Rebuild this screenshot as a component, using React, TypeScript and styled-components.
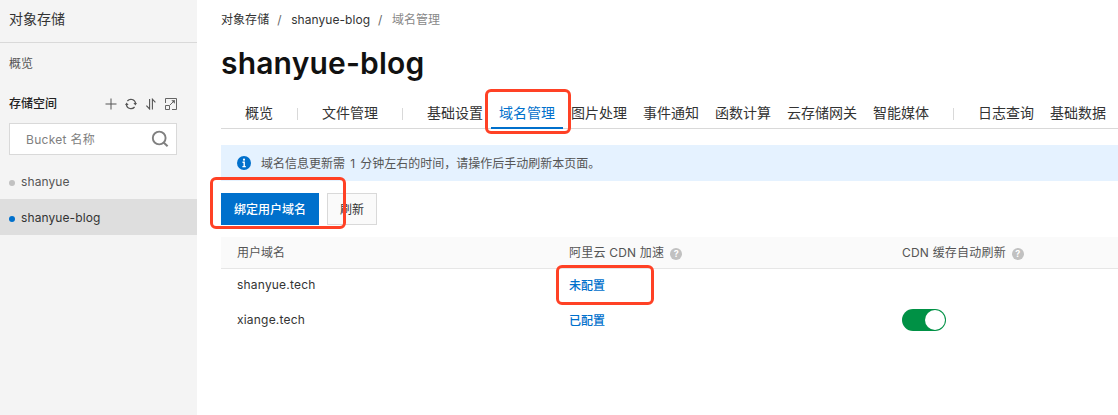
import React from "react";
import styled, { createGlobalStyle } from "styled-components";

const GlobalStyle = createGlobalStyle`
  * { box-sizing: border-box; }
  body {
    margin: 0;
    background: #fff;
    color: #333;
    font: 12px/18px Inter, "Noto Sans CJK SC", sans-serif;
    overflow: hidden;
  }
  h1 { margin: 0; }
`;

const Page = styled.div`
  display: flex;
  position: relative;
  width: 1118px;
  height: 415px;
  overflow: hidden;
`;

const Sidebar = styled.aside`
  flex: none;
  width: 197px;
  background: #f4f4f4;
`;

const SidebarTitle = styled.div`
  height: 43px;
  padding: 8px 9px 0;
  border-bottom: 1px solid #d9d9d9;
  font-size: 14px;
  line-height: 22px;
`;

const SidebarLink = styled.div`
  height: 41px;
  padding: 0 9px;
  color: #555;
  line-height: 41px;
`;

const BucketHeader = styled.div`
  display: flex;
  align-items: center;
  justify-content: space-between;
  height: 39px;
  padding: 0 20px 0 9px;
  color: #222;
  font-weight: 500;
`;

const BucketActions = styled.div`
  display: flex;
  align-items: center;
  gap: 8px;
  color: #555;
`;

const Icon = styled.svg`
  display: block;
  flex: none;
  fill: none;
  stroke: currentColor;
`;

const SearchBox = styled.div`
  display: flex;
  align-items: center;
  justify-content: space-between;
  width: 168px;
  height: 32px;
  margin: 0 0 9px 9px;
  padding: 0 7px 0 16px;
  border: 1px solid #d9d9d9;
  background: #fff;
  color: #808080;
`;

const SearchLabel = styled.span`
  padding-top: 1px;
  letter-spacing: 0.3px;
`;

const BucketItem = styled.div<{ $active?: boolean }>`
  display: flex;
  align-items: center;
  gap: 6px;
  height: ${(p) => (p.$active ? 36 : 35)}px;
  padding: ${(p) => (p.$active ? 2 : 0)}px 0 0 9px;
  background: ${(p) => (p.$active ? "#dedede" : "transparent")};
  color: ${(p) => (p.$active ? "#333" : "#555")};
  font-size: 12px;
  letter-spacing: 0.1px;

  &::before {
    content: "";
    width: 6px;
    height: 6px;
    margin-top: ${(p) => (p.$active ? 1 : 3)}px;
    border-radius: 50%;
    background: ${(p) => (p.$active ? "#0070cc" : "#c1c1c1")};
  }
`;

const Main = styled.main`
  flex: 1;
  min-width: 0;
  padding-left: 24px;
`;

const Breadcrumb = styled.nav`
  display: flex;
  height: 40px;
  line-height: 39px;
  gap: 8px;
`;

const Crumb = styled.span<{ $muted?: boolean }>`
  color: ${(p) => (p.$muted ? "#888" : "#333")};
  letter-spacing: ${(p) => (p.$muted ? 0 : 0.05)}px;
`;

const Slash = styled.span`
  width: 6px;
  color: #666;
`;

const Title = styled.h1`
  height: 58px;
  color: #111;
  font-size: 30px;
  font-weight: 600;
  letter-spacing: 0.18px;
  line-height: 47px;
`;

const Tabs = styled.div`
  display: flex;
  height: 31px;
  padding-left: 16px;
  border-bottom: 1px solid #d9d9d9;
`;

const Tab = styled.div<{ $active?: boolean }>`
  flex: none;
  height: 31px;
  padding: 0 8px;
  border-bottom: 2px solid ${(p) => (p.$active ? "#0070cc" : "transparent")};
  color: ${(p) => (p.$active ? "#0070cc" : "#333")};
  font-size: 14px;
  line-height: 29px;
`;

const TabDivider = styled.i`
  flex: none;
  width: 1px;
  height: 12px;
  margin: 10px 16px 0;
  background: #d9d9d9;
`;

const Notice = styled.div`
  display: flex;
  align-items: center;
  gap: 10px;
  height: 36px;
  margin-top: 16px;
  padding-left: 16px;
  background: #e5f2ff;
  color: #555;
`;

const NoticeText = styled.span`
  padding-top: 2px;
  word-spacing: 1.8px;
`;

const Actions = styled.div`
  display: flex;
  gap: 8px;
  padding: 12px 0;
`;

const Button = styled.button<{ $primary?: boolean }>`
  height: 32px;
  width: ${(p) => (p.$primary ? 98 : 50)}px;
  padding: 2px 0 0;
  border: 1px solid ${(p) => (p.$primary ? "#0070cc" : "#d9d9d9")};
  background: ${(p) => (p.$primary ? "#0070cc" : "#fafafa")};
  color: ${(p) => (p.$primary ? "#fff" : "#333")};
  font: inherit;
  font-weight: ${(p) => (p.$primary ? 500 : 400)};
`;

const Row = styled.div<{ $head?: boolean }>`
  display: grid;
  grid-template-columns: 332px 333px 1fr;
  height: ${(p) => (p.$head ? 32 : 35)}px;
  background: ${(p) => (p.$head ? "#fafafa" : "#fff")};
  border-bottom: ${(p) => (p.$head ? "1px solid #e6e6e6" : "none")};
  color: ${(p) => (p.$head ? "#555" : "#333")};
`;

const Cell = styled.div`
  display: flex;
  align-items: center;
  gap: 6px;
  height: 32px;
  padding-left: 16px;
`;

const HeadLabel = styled.span`
  letter-spacing: 0.2px;
`;

const Domain = styled.span`
  letter-spacing: 0.2px;
`;

const StatusLink = styled.a`
  padding-top: 2px;
  color: #0070cc;
  font-weight: 500;
`;

const Help = styled.span`
  width: 12px;
  height: 12px;
  margin-top: 2px;
  border-radius: 50%;
  background: #c1c1c1;
  color: #fff;
  font-size: 9px;
  font-weight: 700;
  line-height: 12px;
  text-align: center;
`;

const Switch = styled.span`
  display: flex;
  justify-content: flex-end;
  width: 44px;
  height: 22px;
  padding: 1px;
  border-radius: 11px;
  background: #009145;

  &::after {
    content: "";
    width: 20px;
    height: 20px;
    border-radius: 50%;
    background: #fff;
  }
`;

const Highlight = styled.div<{ $x: number; $y: number; $w: number; $h: number }>`
  position: absolute;
  left: ${(p) => p.$x}px;
  top: ${(p) => p.$y}px;
  width: ${(p) => p.$w}px;
  height: ${(p) => p.$h}px;
  border: 3px solid #ff4125;
  border-radius: 6px;
`;

const tabGroups = [
  ["概览"],
  ["文件管理"],
  ["基础设置", "域名管理", "图片处理", "事件通知", "函数计算", "云存储网关", "智能媒体"],
  ["日志查询", "基础数据"],
];

export default function App() {
  return (
    <>
      <GlobalStyle />
      <Page>
        <Sidebar>
          <SidebarTitle>对象存储</SidebarTitle>
          <SidebarLink>概览</SidebarLink>
          <BucketHeader>
            存储空间
            <BucketActions>
              <Icon width="12" height="12" viewBox="0 0 12 12">
                <path d="M6 .5v11M.5 6h11" />
              </Icon>
              <Icon width="12" height="12" viewBox="0 0 12 12">
                <path d="M2.4 3A4.7 4.7 0 0 1 10.6 5.2M9.6 9A4.7 4.7 0 0 1 1.4 6.8" strokeWidth="1.2" />
                <path d="M8.4 5H12L10.4 7.4zM0 7h3.6L1.6 4.6z" fill="currentColor" stroke="none" />
              </Icon>
              <Icon width="12" height="12" viewBox="0 0 12 12">
                <path d="M4.6 1v10L1.4 7.6M7.4 11.5V1.2l3 3.2" strokeWidth="1.1" />
              </Icon>
              <Icon width="12" height="12" viewBox="0 0 12 12">
                <path d="M.5 5V.5h11v11H7M.5 7.5h4v4h-4zM5 7l4.3-4.3" strokeWidth=".9" />
                <path d="M6.3 2.3h3.5v3.5z" fill="currentColor" stroke="none" />
              </Icon>
            </BucketActions>
          </BucketHeader>
          <SearchBox>
            <SearchLabel>Bucket 名称</SearchLabel>
            <Icon width="18" height="18" viewBox="0 0 18 18">
              <circle cx="8.2" cy="8" r="6.4" strokeWidth="1.9" />
              <path d="m12.6 12.6 4 3.7" strokeWidth="2.1" />
            </Icon>
          </SearchBox>
          <BucketItem>shanyue</BucketItem>
          <BucketItem $active>shanyue-blog</BucketItem>
        </Sidebar>

        <Main>
          <Breadcrumb>
            <Crumb>对象存储</Crumb>
            <Slash>/</Slash>
            <Crumb>shanyue-blog</Crumb>
            <Slash>/</Slash>
            <Crumb $muted>域名管理</Crumb>
          </Breadcrumb>
          <Title>shanyue-blog</Title>
          <Tabs>
            {tabGroups.map((group, i) => (
              <React.Fragment key={i}>
                {i > 0 && <TabDivider />}
                {group.map((name) => (
                  <Tab key={name} $active={name === "域名管理"}>
                    {name}
                  </Tab>
                ))}
              </React.Fragment>
            ))}
          </Tabs>
          <Notice>
            <Icon width="14" height="14" viewBox="0 0 14 14">
              <circle cx="7" cy="7" r="7" fill="#0070cc" stroke="none" />
              <circle cx="7" cy="3.7" r="1.1" fill="#fff" stroke="none" />
              <path d="M5.5 6.2h1.7v4.3M5.4 10.6h3.4" stroke="#fff" strokeWidth="1.4" />
            </Icon>
            <NoticeText>域名信息更新需 1 分钟左右的时间，请操作后手动刷新本页面。</NoticeText>
          </Notice>
          <Actions>
            <Button $primary>绑定用户域名</Button>
            <Button>刷新</Button>
          </Actions>
          <Row $head>
            <Cell>用户域名</Cell>
            <Cell>
              <HeadLabel>阿里云 CDN 加速</HeadLabel>
              <Help>?</Help>
            </Cell>
            <Cell>
              <HeadLabel>CDN 缓存自动刷新</HeadLabel>
              <Help>?</Help>
            </Cell>
          </Row>
          <Row>
            <Cell>
              <Domain>shanyue.tech</Domain>
            </Cell>
            <Cell>
              <StatusLink>未配置</StatusLink>
            </Cell>
            <Cell />
          </Row>
          <Row>
            <Cell>
              <Domain>xiange.tech</Domain>
            </Cell>
            <Cell>
              <StatusLink>已配置</StatusLink>
            </Cell>
            <Cell>
              <Switch />
            </Cell>
          </Row>
        </Main>

        <Highlight $x={485} $y={89} $w={86} $h={45} />
        <Highlight $x={210} $y={177} $w={136} $h={52} />
        <Highlight $x={556} $y={265} $w={98} $h={40} />
      </Page>
    </>
  );
}
